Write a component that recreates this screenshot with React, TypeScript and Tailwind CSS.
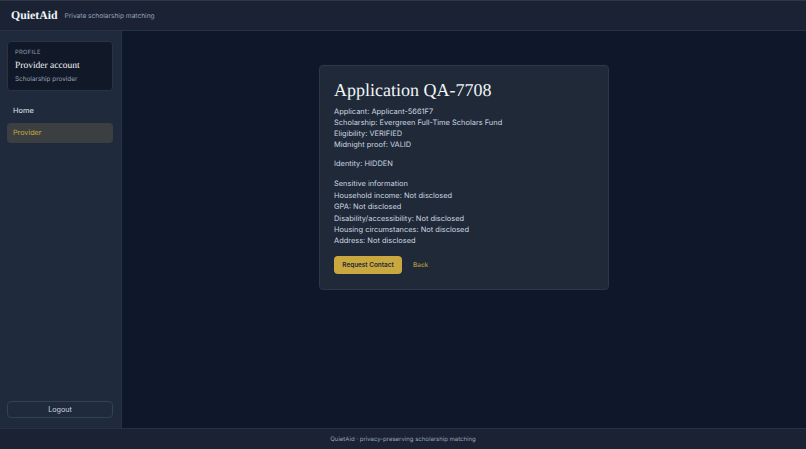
export default function App() {
  const serif = "font-['Liberation_Serif',serif]";
  return (
    <div className="h-[449px] w-[806px] overflow-hidden flex flex-col bg-[#0f172a] font-['Inter',sans-serif] text-[#cbd5e1] antialiased [text-rendering:geometricPrecision] opacity-[0.999]">
      <header className="h-[31px] shrink-0 flex items-center gap-[7px] px-[11px] pt-[1px] bg-[#1a2233] border-t border-t-[#2d3748] border-b border-b-[#273244]">
        <span className={`${serif} text-[11.8px] font-bold text-[#f1f5f9]`}>QuietAid</span>
        <span className="text-[6.6px] pt-[1px] text-[#94a3b8]">Private scholarship matching</span>
      </header>
      <div className="flex flex-1 min-h-0">
        <aside className="w-[122px] shrink-0 flex flex-col justify-between bg-[#1f2a3c] border-r border-[#273244] pl-[7px] pr-[8px] pt-[10px] pb-[10px]">
          <div className="flex flex-col">
            <div className="h-[50px] rounded-[4px] bg-[#111827] border border-[#273244] px-[7px] pt-[7px] flex flex-col">
              <span className="text-[5.8px] leading-[8px] tracking-[0.3px] text-[#94a3b8]">PROFILE</span>
              <span className={`${serif} text-[9.5px] leading-[14px] mt-[2px] text-[#f1f5f9]`}>Provider account</span>
              <span className="text-[6.4px] leading-[10px] mt-[1px] text-[#94a3b8]">Scholarship provider</span>
            </div>
            <div className="mt-[10px] h-[20px] flex items-center px-[6px] text-[7.4px] text-[#e2e8f0]">Home</div>
            <div className="mt-[2px] h-[20px] flex items-center px-[6px] pt-[1px] rounded-[4px] bg-[#3b3f42] text-[7.2px] text-[#c9a83f]">Provider</div>
          </div>
          <button className="h-[17px] pt-[2px] rounded-[4px] border border-[#334155] text-[7.2px] text-[#cbd5e1]">Logout</button>
        </aside>
        <main className="flex-1 flex justify-center items-start pt-[34px]">
          <div className="w-[290px] h-[225px] rounded-[4px] bg-[#1f2937] border border-[#2d3748] pl-[14px] pt-[14px] text-[7.45px] leading-[11px]">
            <h1 className={`${serif} text-[18px] leading-[20px] text-[#f1f5f9]`}>Application QA-7708</h1>
            <div className="mt-[6px] flex flex-col">
              <span>Applicant: Applicant-5661F7</span>
              <span>Scholarship: Evergreen Full-Time Scholars Fund</span>
              <span>Eligibility: VERIFIED</span>
              <span>Midnight proof: VALID</span>
            </div>
            <p className="mt-[8px]">Identity: HIDDEN</p>
            <div className="mt-[9px] flex flex-col leading-[11.2px]">
              <span className="mb-[1px]">Sensitive information</span>
              <span>Household income: Not disclosed</span>
              <span>GPA: Not disclosed</span>
              <span>Disability/accessibility: Not disclosed</span>
              <span>Housing circumstances: Not disclosed</span>
              <span>Address: Not disclosed</span>
            </div>
            <div className="mt-[10px] flex items-center gap-[11px]">
              <button className="w-[68px] h-[18px] pt-[1px] rounded-[4px] bg-[#c9a83f] text-[#1f2937] text-[6.4px] font-semibold">Request Contact</button>
              <span className="text-[6.4px] pt-[1px] font-semibold text-[#a8903f]">Back</span>
            </div>
          </div>
        </main>
      </div>
      <footer className="h-[21px] shrink-0 flex items-center justify-center bg-[#1a2233] border-t border-[#273244] text-[6px] text-[#94a3b8]">
        QuietAid · privacy-preserving scholarship matching
      </footer>
    </div>
  );
}
